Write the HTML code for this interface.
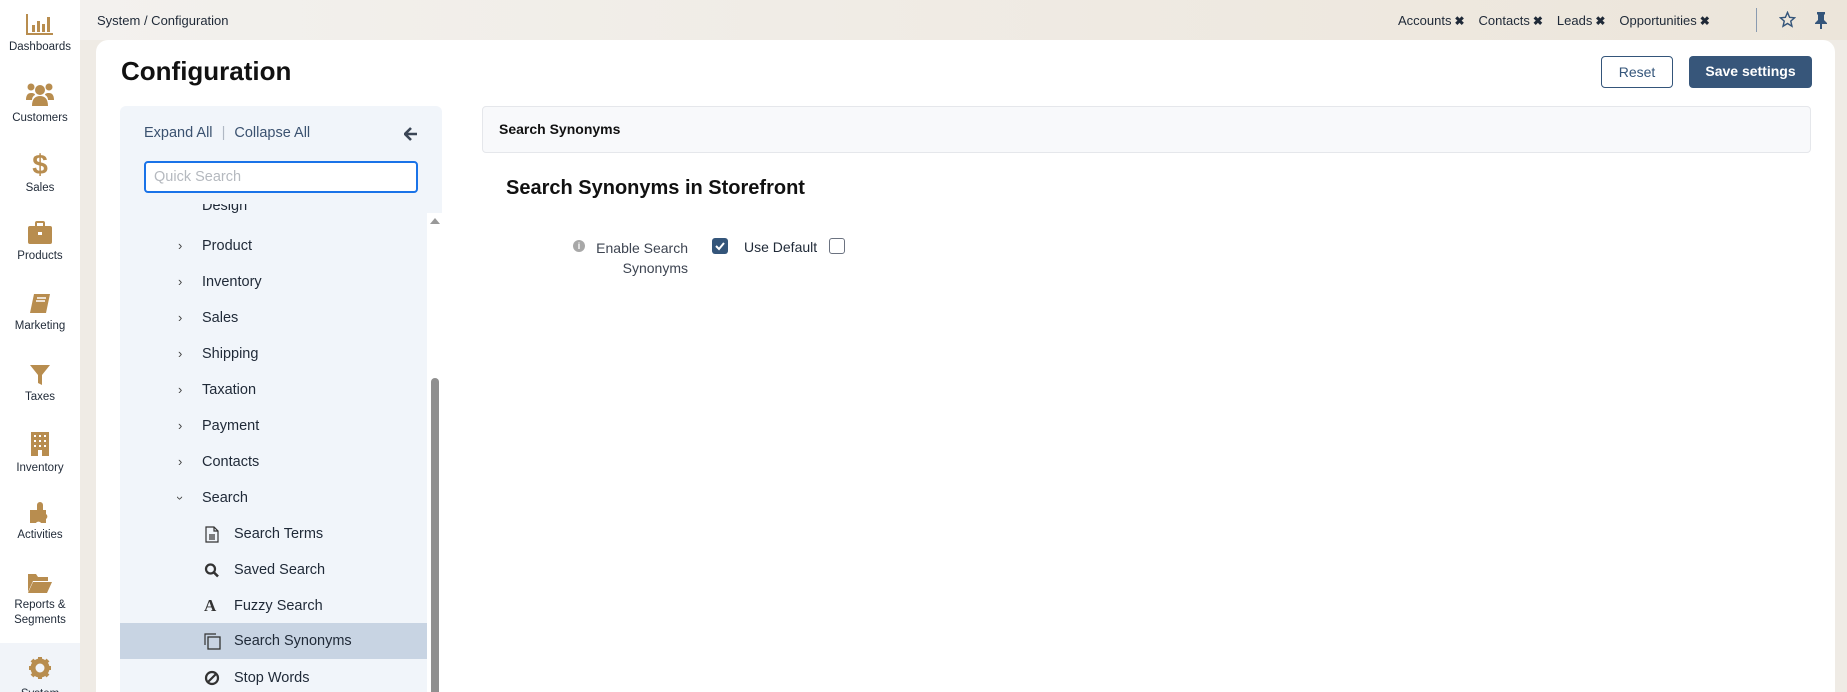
<!DOCTYPE html>
<html style="overflow:hidden;height:692px"><head><meta charset="utf-8"><style>
*{box-sizing:border-box;margin:0;padding:0}
body{width:1847px;height:692px;overflow:hidden;font-family:"Liberation Sans",sans-serif;background:#efebe5;color:#1f2937;position:relative}
.nav{position:absolute;left:0;top:0;width:80px;height:692px;background:#fff;overflow:hidden}
.ni{position:absolute;left:0;width:80px;text-align:center;font-size:11.5px;color:#1f2937;line-height:15px}
.ni svg{display:block;margin:0 auto 4px}
.sel{position:absolute;left:0;top:643px;width:80px;height:49px;background:#f1f4f9}
.top{position:absolute;left:80px;top:0;right:0;height:40px;background:linear-gradient(90deg,#f3f1ee,#ece5da)}
.bc{position:absolute;left:97px;top:13px;font-size:13px;color:#1f2937}
.tabs{position:absolute;left:1398px;top:13px;font-size:13px;color:#1f2937;white-space:nowrap}
.tabs span{margin-right:14px}
.tabs b{font-size:12px;margin-left:3px}
.card{position:absolute;left:96px;top:40px;width:1739px;height:652px;background:#fff;border-radius:12px 12px 0 0}
h1{position:absolute;left:121px;top:56px;font-size:26px;font-weight:600;color:#111}
.btn{position:absolute;top:56px;height:32px;border-radius:4px;font-size:14px;line-height:30px;text-align:center}
.lp{position:absolute;left:120px;top:106px;width:322px;height:586px;background:#f1f5fa;border-radius:6px 6px 0 0}
.ea{position:absolute;left:144px;top:125px;font-size:14.5px;color:#3b5270}
.qs{position:absolute;left:144px;top:161px;width:274px;height:32px;border:2px solid #1a73e8;border-radius:4px;background:#fff;font-size:14.5px;color:#b5b9bf;padding:6px 8px}
.sb{position:absolute;left:427px;top:213px;width:15px;height:479px;background:#fff}
.th{position:absolute;left:431px;top:378px;width:8px;height:320px;background:#8f8f8f;border-radius:4px}
.it{position:absolute;left:120px;width:307px;height:36px;font-size:14.5px;line-height:36px;color:#1f2937}
.it .c{position:absolute;left:58px;font-size:13px;color:#444}
.it .t{position:absolute;left:82px}
.it .i{position:absolute;left:84px;top:10px}
.it .t2{position:absolute;left:114px}
.hd{position:absolute;left:482px;top:106px;width:1329px;height:47px;background:#f8f9fb;border:1px solid #e5e7eb;border-radius:4px;font-size:14px;font-weight:bold;padding:14px 16px;color:#111}
</style></head><body>
<div class="nav">
<div class="ni" style="top:12px"><svg width="30" height="24" viewBox="0 0 30 24"><path d="M2 2V22H28" stroke="#b88d4f" stroke-width="2" fill="none"/><rect x="7" y="13" width="3" height="7" fill="#b88d4f"/><rect x="12" y="9" width="3" height="11" fill="#b88d4f"/><rect x="17" y="12" width="3" height="8" fill="#b88d4f"/><rect x="22" y="5" width="3" height="15" fill="#b88d4f"/></svg>Dashboards</div>
<div class="ni" style="top:81px"><svg width="28" height="26" viewBox="0 0 28 26"><circle cx="14" cy="9" r="5" fill="#b88d4f"/><circle cx="5" cy="6" r="3.5" fill="#b88d4f"/><circle cx="23" cy="6" r="3.5" fill="#b88d4f"/><path d="M6 25c0-7 3-10 8-10s8 3 8 10z M0 19c0-5 2-7 5-7s4 1 4 2c-2 1-3 3-3 5z M28 19c0-5-2-7-5-7s-4 1-4 2c2 1 3 3 3 5z" fill="#b88d4f"/></svg>Customers</div>
<div class="ni" style="top:151px"><div style="font-size:28px;font-weight:bold;color:#b88d4f;line-height:28px;margin-bottom:2px">$</div>Sales</div>
<div class="ni" style="top:221px"><svg width="26" height="24" viewBox="0 0 26 24"><rect x="9" y="1" width="8" height="5" rx="1" fill="none" stroke="#b88d4f" stroke-width="2"/><rect x="1" y="5" width="24" height="18" rx="2" fill="#b88d4f"/><rect x="11" y="11" width="4" height="3" fill="#fff"/></svg>Products</div>
<div class="ni" style="top:293px"><svg width="24" height="22" viewBox="0 0 24 22"><path d="M6 1H22L18 20H2Z" fill="#b88d4f"/><path d="M9 5h9M8 8h9" stroke="#fff" stroke-width="1.5"/></svg>Marketing</div>
<div class="ni" style="top:364px"><svg width="22" height="22" viewBox="0 0 22 22"><path d="M1 1H21L13 11V21L9 19V11Z" fill="#b88d4f"/></svg>Taxes</div>
<div class="ni" style="top:431px"><svg width="20" height="26" viewBox="0 0 20 26"><rect x="1" y="1" width="18" height="24" fill="#b88d4f"/><g fill="#fff"><rect x="4" y="4" width="2" height="2"/><rect x="9" y="4" width="2" height="2"/><rect x="14" y="4" width="2" height="2"/><rect x="4" y="9" width="2" height="2"/><rect x="9" y="9" width="2" height="2"/><rect x="14" y="9" width="2" height="2"/><rect x="4" y="14" width="2" height="2"/><rect x="9" y="14" width="2" height="2"/><rect x="14" y="14" width="2" height="2"/><rect x="8" y="19" width="4" height="6"/></g></svg>Inventory</div>
<div class="ni" style="top:502px"><svg width="24" height="22" viewBox="0 0 24 22"><path d="M2 8H9V3a3 3 0 016 0V8h3v4a3 3 0 010 5v4H13a3 3 0 00-5 0H2z" fill="#b88d4f"/></svg>Activities</div>
<div class="ni" style="top:572px"><svg width="26" height="22" viewBox="0 0 26 22"><path d="M1 2H9L11 5H21V9H6L1 20Z" fill="#b88d4f"/><path d="M6 10H25L20 21H1Z" fill="#b88d4f"/></svg>Reports &amp;<br>Segments</div>
<div class="sel"></div>
<div class="ni" style="top:657px"><svg width="22" height="22" viewBox="0 0 22 22" style="margin-bottom:8px"><circle cx="11" cy="11" r="7" fill="none" stroke="#b88d4f" stroke-width="5"/><g stroke="#b88d4f" stroke-width="4"><path d="M11 0v5M11 17v5M0 11h5M17 11h5M3 3l4 4M15 15l4 4M19 3l-4 4M3 19l4-4"/></g></svg>System</div>
</div>
<div class="top"></div>
<div class="bc">System / Configuration</div>
<div class="tabs"><span>Accounts<b>✖</b></span><span>Contacts<b>✖</b></span><span>Leads<b>✖</b></span><span>Opportunities<b>✖</b></span></div>
<div style="position:absolute;left:1756px;top:8px;width:1px;height:24px;background:#8a9bb0"></div>
<svg style="position:absolute;left:1779px;top:11px" width="17" height="17" viewBox="0 0 24 24"><path d="M12 2l3 7 7 .6-5.4 4.7 1.7 7.2L12 17.6 5.7 21.5l1.7-7.2L2 9.6 9 9z" fill="none" stroke="#34557a" stroke-width="2"/></svg>
<svg style="position:absolute;left:1814px;top:11px" width="14" height="18" viewBox="0 0 14 18"><path d="M3 1h8v2l-1 1v5l3 3v1H1v-1l3-3V4L3 3z M6 13h2v5H6z" fill="#34557a"/></svg>
<div class="card"></div>
<h1>Configuration</h1>
<div class="btn" style="left:1601px;width:72px;border:1px solid #34557a;color:#34557a;background:#fff">Reset</div>
<div class="btn" style="left:1689px;width:123px;background:#37567a;color:#fff;font-weight:600">Save settings</div>
<div class="lp"></div>
<div class="ea">Expand All <span style="color:#b0b8c4;margin:0 5px">|</span> Collapse All</div>
<svg style="position:absolute;left:404px;top:127px" width="14" height="14" viewBox="0 0 14 14"><path d="M7 1L1 7l6 6M1 7h12" stroke="#3b4656" stroke-width="2.6" fill="none"/></svg>
<div class="qs">Quick Search</div>
<div style="position:absolute;left:202px;top:204px;height:9px;overflow:hidden;font-size:14.5px;line-height:12px;color:#1f2937"><div style="margin-top:-4px">Design</div></div>
<div class="sb"></div>
<div style="position:absolute;left:430px;top:218px;width:0;height:0;border-left:5px solid transparent;border-right:5px solid transparent;border-bottom:6px solid #999"></div>
<div class="th"></div>
<div class="it" style="top:228px"><span class="c">›</span><span class="t">Product</span></div>
<div class="it" style="top:264px"><span class="c">›</span><span class="t">Inventory</span></div>
<div class="it" style="top:300px"><span class="c">›</span><span class="t">Sales</span></div>
<div class="it" style="top:336px"><span class="c">›</span><span class="t">Shipping</span></div>
<div class="it" style="top:372px"><span class="c">›</span><span class="t">Taxation</span></div>
<div class="it" style="top:408px"><span class="c">›</span><span class="t">Payment</span></div>
<div class="it" style="top:444px"><span class="c">›</span><span class="t">Contacts</span></div>
<div class="it" style="top:480px"><span class="c" style="transform:rotate(90deg);top:0">›</span><span class="t">Search</span></div>
<div class="it" style="top:516px"><svg class="i" width="16" height="17" viewBox="0 0 16 17"><path d="M2 1h8l4 4v11H2z M10 1v4h4 M5 9h6M5 11h6M5 13h6" fill="none" stroke="#333" stroke-width="1.2"/></svg><span class="t2">Search Terms</span></div>
<div class="it" style="top:552px"><svg class="i" width="16" height="17" viewBox="0 0 16 17"><circle cx="6.5" cy="7" r="4.5" fill="none" stroke="#333" stroke-width="2.2"/><path d="M10 10.5l4 4" stroke="#333" stroke-width="2.6"/></svg><span class="t2">Saved Search</span></div>
<div class="it" style="top:588px"><span style="position:absolute;left:84px;font-family:'Liberation Serif',serif;font-weight:bold;font-size:17px;color:#333">A</span><span class="t2">Fuzzy Search</span></div>
<div class="it" style="top:623px;background:#c8d4e3"><svg class="i" width="17" height="17" viewBox="0 0 17 17"><path d="M1 12V1h11" fill="none" stroke="#333" stroke-width="1.2"/><rect x="4" y="4" width="12" height="12" fill="none" stroke="#333" stroke-width="1.3"/></svg><span class="t2">Search Synonyms</span></div>
<div class="it" style="top:660px"><svg class="i" width="16" height="16" viewBox="0 0 16 16"><circle cx="8" cy="8" r="6" fill="none" stroke="#333" stroke-width="2.2"/><path d="M4 12L12 4" stroke="#333" stroke-width="2.2"/></svg><span class="t2">Stop Words</span></div>
<div class="hd">Search Synonyms</div>
<div style="position:absolute;left:506px;top:177px;font-size:20px;font-weight:bold;color:#111">Search Synonyms in Storefront</div>
<div style="position:absolute;left:573px;top:240px;width:12px;height:12px;border-radius:6px;background:#a8a8a8;color:#fff;font-size:9px;font-weight:bold;text-align:center;line-height:12px">i</div>
<div style="position:absolute;left:560px;top:238px;width:128px;text-align:right;font-size:14px;line-height:20px;color:#3d4451">Enable Search<br>Synonyms</div>
<div style="position:absolute;left:712px;top:238px;width:16px;height:16px;border-radius:3px;background:#34557a"><svg width="16" height="16" viewBox="0 0 16 16"><path d="M4 8l3 3 5-6" stroke="#fff" stroke-width="2" fill="none"/></svg></div>
<div style="position:absolute;left:744px;top:238px;font-size:14px;line-height:18px;color:#1f2937">Use Default</div>
<div style="position:absolute;left:829px;top:238px;width:16px;height:16px;border-radius:3px;border:1px solid #6b7280;background:#fff"></div>
</body></html>
